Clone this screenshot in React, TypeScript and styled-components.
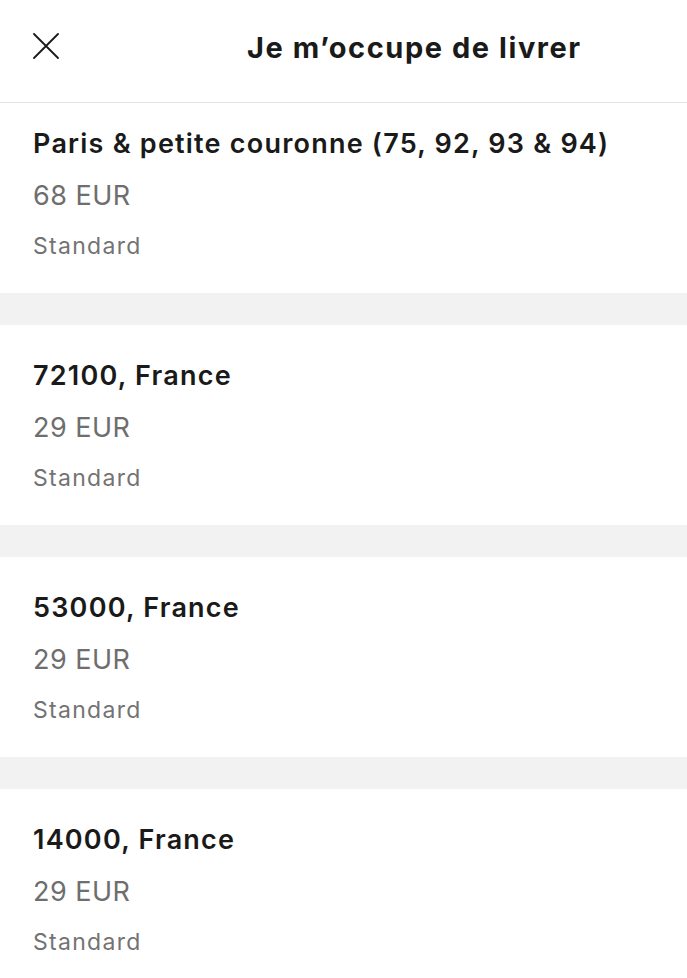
import React from "react";
import styled, { createGlobalStyle } from "styled-components";

const Global = createGlobalStyle`
  html, body { margin: 0; padding: 0; background: #ffffff; }
  body { font-family: Inter, "Noto Sans", sans-serif; -webkit-font-smoothing: antialiased; }
  * { box-sizing: border-box; }
`;

const Page = styled.div`
  width: 687px;
  min-height: 978px;
  background: #f2f2f2;
  overflow: hidden;
  position: relative;
`;

const Header = styled.header`
  height: 103px;
  background: #ffffff;
  border-bottom: 1.5px solid #e3e3e3;
  display: flex;
  align-items: center;
  padding: 0 0 0 33px;
`;

const CloseButton = styled.button`
  width: 26px;
  height: 26px;
  padding: 0;
  border: none;
  background: none;
  display: flex;
  align-items: center;
  justify-content: center;
  color: #1a1a1a;
  margin-top: -10px;
`;

const Title = styled.h1`
  margin: -8px 0 0 188px;
  font-size: 29px;
  font-weight: 700;
  color: #1a1a1a;
  letter-spacing: 1.55px;
`;

const List = styled.div`
  display: flex;
  flex-direction: column;
  gap: 32px;
`;

const Option = styled.section<{ $first?: boolean }>`
  background: #ffffff;
  padding: ${(p) => (p.$first ? "24px" : "34px")} 33px 32px;
  display: flex;
  flex-direction: column;
  height: ${(p) => (p.$first ? "190px" : "200px")};
`;

const Name = styled.div`
  font-size: 27px;
  font-weight: 600;
  color: #1a1a1a;
  line-height: 34px;
  letter-spacing: 1.22px;
`;

const Price = styled.div`
  margin-top: 18px;
  font-size: 27px;
  font-weight: 400;
  color: #6e6e6e;
  line-height: 34px;
  letter-spacing: 0.5px;
`;

const Mode = styled.div`
  margin-top: 18px;
  font-size: 23px;
  font-weight: 400;
  color: #737373;
  line-height: 30px;
  letter-spacing: 1.3px;
`;

const options = [
  { name: "Paris & petite couronne (75, 92, 93 & 94)", price: "68 EUR" },
  { name: "72100, France", price: "29 EUR" },
  { name: "53000, France", price: "29 EUR" },
  { name: "14000, France", price: "29 EUR" },
];

export default function App() {
  return (
    <>
      <Global />
      <Page>
        <Header>
          <CloseButton aria-label="Fermer">
            <svg width="26" height="26" viewBox="0 0 26 26" fill="none">
              <path d="M1 1L25 25M25 1L1 25" stroke="#1a1a1a" strokeWidth="1.8" strokeLinecap="round" />
            </svg>
          </CloseButton>
          <Title>Je m’occupe de livrer</Title>
        </Header>
        <List>
          {options.map((o, i) => (
            <Option key={i} $first={i === 0}>
              <Name>{o.name}</Name>
              <Price>{o.price}</Price>
              <Mode>Standard</Mode>
            </Option>
          ))}
        </List>
      </Page>
    </>
  );
}
